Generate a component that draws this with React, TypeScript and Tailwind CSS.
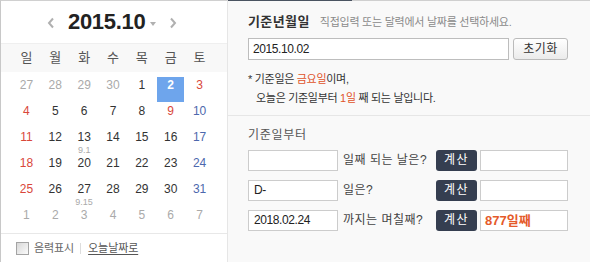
import React from "react";

type Day = { n: number; cur?: boolean; color?: "red" | "blue"; lunar?: string; sel?: boolean };

const rows: Day[][] = [
  [{ n: 27 }, { n: 28 }, { n: 29 }, { n: 30 }, { n: 1, cur: true }, { n: 2, cur: true, sel: true }, { n: 3, cur: true, color: "red" }],
  [4, 5, 6, 7, 8, 9, 10].map((n, i) => ({ n, cur: true, color: i === 0 || n === 9 ? "red" : i === 6 ? "blue" : undefined })),
  [11, 12, 13, 14, 15, 16, 17].map((n, i) => ({ n, cur: true, color: i === 0 ? "red" : i === 6 ? "blue" : undefined, lunar: n === 13 ? "9.1" : undefined })),
  [18, 19, 20, 21, 22, 23, 24].map((n, i) => ({ n, cur: true, color: i === 0 ? "red" : i === 6 ? "blue" : undefined })),
  [25, 26, 27, 28, 29, 30, 31].map((n, i) => ({ n, cur: true, color: i === 0 ? "red" : i === 6 ? "blue" : undefined, lunar: n === 27 ? "9.15" : undefined })),
  [1, 2, 3, 4, 5, 6, 7].map((n) => ({ n })),
];

const weekdays = ["일", "월", "화", "수", "목", "금", "토"];

function Cell({ d }: { d: Day }) {
  let color = "text-[#aaaaaa]";
  if (d.cur) color = d.color === "red" ? "text-[#d9473a]" : d.color === "blue" ? "text-[#4d68ad]" : "text-[#333333]";
  if (d.sel) color = "text-white font-bold";
  return (
    <div className="h-[26px] px-[1px] pb-[1px]">
      <div className={`h-full flex flex-col items-center ${d.sel ? "bg-[#6ea5ec]" : ""}`}>
        <div className={`text-[12px] leading-[14px] mt-[1px] ${color}`}>{d.n}</div>
        {d.lunar && <div className="text-[9px] leading-[11px] mt-[1px] text-[#aaaaaa]">{d.lunar}</div>}
      </div>
    </div>
  );
}

function Row({ value, label, result }: { value: string; label: string; result?: string }) {
  return (
    <div className="flex items-center h-[21px]">
      <div className="w-[90px] h-[21px] bg-white border border-[#cccccc] text-[12px] leading-[19px] pl-[5px] text-[#222] tracking-[-0.4px]">{value}</div>
      <div className="w-[98px] pl-[5px] text-[12px] text-[#444] leading-[16px] -mt-[2px] tracking-[0.5px]">{label}</div>
      <button className="w-[41px] h-[21px] bg-[#353e50] rounded-[3px] text-white text-[12px] leading-[21px] tracking-[1.5px]">계산</button>
      <div className="ml-[3px] w-[88px] h-[21px] bg-white border border-[#cccccc] pl-[4px] text-[13px] leading-[19px] font-bold text-[#e55a2a]">{result}</div>
    </div>
  );
}

export default function App() {
  return (
    <div className="w-[590px] h-[262px] flex bg-white overflow-hidden" style={{ fontFamily: '"Liberation Sans", "Noto Sans CJK KR", sans-serif' }}>
      {/* Left calendar */}
      <div className="w-[228px] h-full border-l border-t border-r border-l-[#c8c8c8] border-t-[#d0d0d0] border-r-[#e6e6e6] bg-white flex flex-col">
        <div className="h-[42px] flex items-center pl-[46px]">
          <svg width="8" height="12" viewBox="0 0 8 12" className="mt-[2px]">
            <polyline points="6,1.5 2,6 6,10.5" fill="none" stroke="#b0b0b0" strokeWidth="2" />
          </svg>
          <div className="ml-[13px] text-[22px] font-bold text-[#222] leading-[26px] tracking-[-0.3px]">2015.10</div>
          <svg width="6" height="4" viewBox="0 0 6 4" className="ml-[5px] mt-[4px]">
            <polygon points="0,0 6,0 3,4" fill="#b0b0b0" />
          </svg>
          <svg width="8" height="12" viewBox="0 0 8 12" className="ml-[13px] mt-[2px]">
            <polyline points="2,1.5 6,6 2,10.5" fill="none" stroke="#b0b0b0" strokeWidth="2" />
          </svg>
        </div>
        <div className="h-[29px] bg-[#f8f8f8] border-t border-[#efefef] grid grid-cols-7 pl-[11px] pr-[13px] items-center">
          {weekdays.map((w) => (
            <div key={w} className="text-center text-[13px] text-[#555] leading-[16px]">{w}</div>
          ))}
        </div>
        <div className="mt-[5px] pl-[11px] pr-[13px] grid grid-cols-7">
          {rows.flat().map((d, i) => (
            <Cell key={i} d={d} />
          ))}
        </div>
        <div className="flex-1 border-t border-[#e8e8e8] flex items-center pl-[15px]">
          <div className="w-[13px] h-[13px] border border-[#a4a4a4] bg-linear-to-br from-[#d8d8d8] to-[#fbfbfb]" />
          <span className="ml-[5px] text-[11px] text-[#666] leading-[16px] tracking-[-0.1px]">음력표시</span>
          <span className="ml-[6px] w-px h-[11px] bg-[#dddddd]" />
          <span className="ml-[7px] text-[11px] text-[#555] leading-[16px] tracking-[-0.1px] underline underline-offset-2">오늘날짜로</span>
        </div>
      </div>

      {/* Right panel */}
      <div className="flex-1 h-full bg-[#f9f9f9] flex flex-col">
        <div className="flex h-px">
          <div className="w-[124px] bg-[#4a5361]" />
          <div className="flex-1 bg-[#cfcfcf]" />
        </div>
        <div className="pl-[20px] pr-[22px]">
          <div className="mt-[11px] h-[20px] flex items-center">
            <span className="text-[13px] font-bold text-[#333] tracking-[0.4px]">기준년월일</span>
            <span className="ml-[10px] text-[11px] text-[#8a8a8a] tracking-[-0.25px]">직접입력 또는 달력에서 날짜를 선택하세요.</span>
          </div>
          <div className="mt-[6px] flex">
            <div className="w-[261px] h-[22px] bg-white border border-[#bdbdbd] pl-[4px] text-[12px] leading-[20px] text-[#222] tracking-[-0.4px]">2015.10.02</div>
            <button className="ml-[4px] w-[55px] h-[22px] rounded-[3px] border border-[#bbbbbb] bg-linear-to-b from-white to-[#ebebeb] text-[12px] text-[#333] leading-[20px] tracking-[0.5px]">초기화</button>
          </div>
          <div className="mt-[11px] text-[11px] leading-[16px] text-[#333] tracking-[-0.3px]">
            * 기준일은 <span className="text-[#e0542a]">금요일</span>이며,
          </div>
          <div className="mt-[3px] pl-[8px] text-[11px] leading-[16px] text-[#333] tracking-[-0.3px]">
            오늘은 기준일부터 <span className="text-[#e0542a]">1일</span> 째 되는 날입니다.
          </div>
        </div>
        <div className="mt-[9px] border-t border-[#e6e6e6] pl-[20px] pr-[22px]">
          <div className="mt-[11px] text-[12px] leading-[16px] text-[#555] tracking-[0.7px]">기준일부터</div>
          <div className="mt-[7px] flex flex-col gap-[9px]">
            <Row value="" label="일째 되는 날은?" />
            <Row value="D-" label="일은?" />
            <Row value="2018.02.24" label="까지는 며칠째?" result="877일째" />
          </div>
        </div>
      </div>
    </div>
  );
}
